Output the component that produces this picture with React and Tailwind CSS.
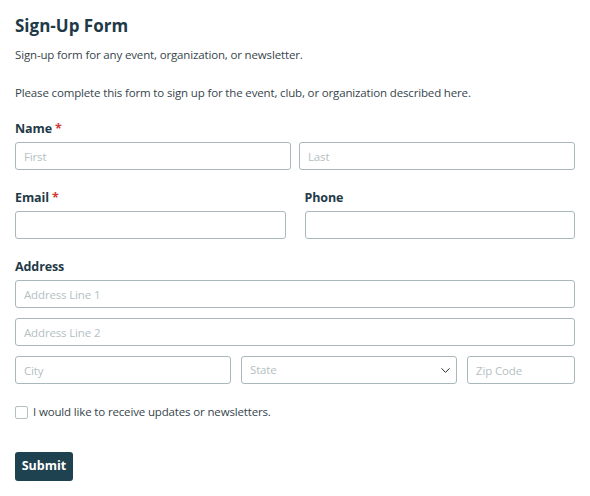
import { ChevronDown } from "lucide-react";

const inputCls =
  "h-[28px] w-full rounded-[3px] border border-[#a9b9bb] bg-white px-[8px] text-[11.5px] tracking-[-0.15px] text-[#2d3b42] placeholder:text-[#b4bfc2] outline-none";

function Label({ children, required }) {
  return (
    <div className="mb-[4px] h-[18px] text-[12.5px] font-bold leading-[18px] tracking-[-0.1px] text-[#1f3a47]">
      {children}
      {required && <span className="ml-[3px] text-[#d03a3a]">*</span>}
    </div>
  );
}

export default function App() {
  return (
    <div className="min-h-[496px] bg-white px-[15px] pt-[14px] font-['Open_Sans',sans-serif] text-[#36454c]">
      <h1 className="text-[17px] font-bold leading-[24px] text-[#1f3a47]">Sign-Up Form</h1>
      <p className="mt-[8px] text-[11.5px] leading-[18px] tracking-[-0.15px]">
        Sign-up form for any event, organization, or newsletter.
      </p>
      <p className="mt-[20px] text-[11.5px] leading-[18px] tracking-[-0.15px]">
        Please complete this form to sign up for the event, club, or organization described here.
      </p>

      <form className="w-[560px]" onSubmit={(e) => e.preventDefault()}>
        {/* Name */}
        <div className="mt-[18px]">
          <Label required>Name</Label>
          <div className="grid grid-cols-2 gap-[8px]">
            <input className={inputCls} placeholder="First" />
            <input className={inputCls} placeholder="Last" />
          </div>
        </div>

        {/* Email + Phone */}
        <div className="mt-[19px] grid grid-cols-2 gap-[19px]">
          <div>
            <Label required>Email</Label>
            <input className={inputCls} />
          </div>
          <div>
            <Label>Phone</Label>
            <input className={inputCls} />
          </div>
        </div>

        {/* Address */}
        <div className="mt-[19px]">
          <Label>Address</Label>
          <div className="flex flex-col gap-[10px]">
            <input className={inputCls} placeholder="Address Line 1" />
            <input className={inputCls} placeholder="Address Line 2" />
            <div className="grid grid-cols-[2fr_2fr_1fr] gap-[10px]">
              <input className={inputCls} placeholder="City" />
              <div className="relative">
                <select
                  defaultValue=""
                  className="h-[28px] w-full appearance-none rounded-[3px] border border-[#a9b9bb] bg-white px-[8px] text-[11.5px] tracking-[-0.15px] text-[#b4bfc2] outline-none"
                >
                  <option value="">State</option>
                </select>
                <ChevronDown
                  className="pointer-events-none absolute right-[4px] top-[7px] h-[15px] w-[15px] text-[#1f2d33]"
                  strokeWidth={1.6}
                />
              </div>
              <input className={inputCls} placeholder="Zip Code" />
            </div>
          </div>
        </div>

        {/* Newsletter */}
        <label className="mt-[19px] flex items-center gap-[5px] text-[11.5px] leading-[18px] tracking-[-0.15px]">
          <span className="h-[13px] w-[13px] rounded-[2px] border border-[#b4c0c2] bg-white" />
          I would like to receive updates or newsletters.
        </label>

        <button
          type="submit"
          className="mt-[31px] h-[29px] w-[58px] rounded-[3px] bg-[#1f4250] text-[12.5px] font-bold text-white"
        >
          Submit
        </button>
      </form>
    </div>
  );
}
